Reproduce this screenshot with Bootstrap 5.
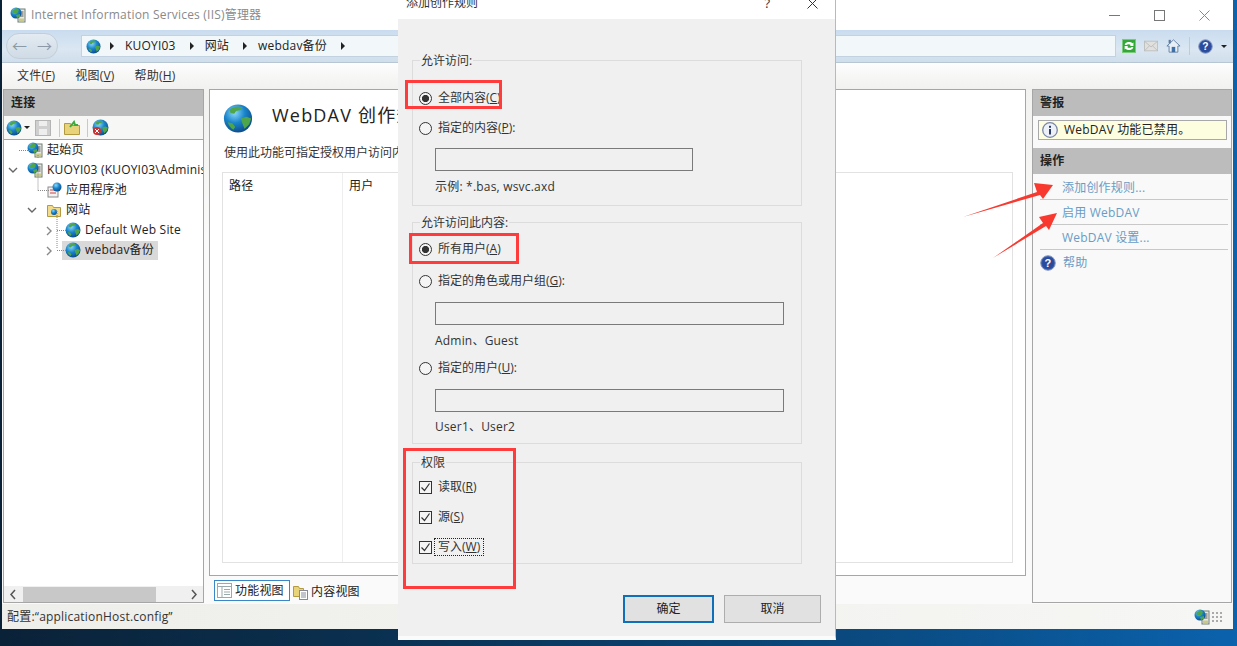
<!DOCTYPE html>
<html lang="zh-CN">
<head>
<meta charset="utf-8">
<title>IIS</title>
<link rel="stylesheet" href="https://cdn.jsdelivr.net/npm/bootstrap@5.3.0/dist/css/bootstrap.min.css">
<style>
html,body{margin:0;height:646px;overflow:hidden}
body{font:12px/16px "Open Sans","Noto Sans CJK SC",sans-serif;letter-spacing:.2px;color:#222;background:#0b2a45}
.desk{position:relative;width:1237px;height:646px;overflow:hidden;background:linear-gradient(90deg,#0a2238 0,#0a3050 30%,#0a4a80 70%,#0b62ad 100%)}
.appwin{margin-left:2px;width:1231px;height:629px;background:#fff}
.ttl{height:30px;padding:0 6px 0 8px;background:#fff;color:#8a8a8a;font-size:12px;flex:none}
.ttl svg.ap{margin-right:5px}
.winbtn{width:45px}
.addr{height:33px;flex:none;background:linear-gradient(#c9dcef,#dbe7f2 60%,#cfdeec);border-bottom:1px solid #b8c6d4;padding:0 6px 0 4px}
.navpill{width:52px;height:26px;border-radius:13px;background:linear-gradient(#e4ebf2,#cfdbe6);border:1px solid #c3ced9;margin-right:23px;color:#8d99a5;font-size:15px;flex:none}
.addrbox{height:22px;flex:1;background:#f2f8fa;border:1px solid #c2d2e0;padding-left:4px;color:#222}
.crumb{width:0;height:0;border-left:4px solid #222;border-top:4px solid transparent;border-bottom:4px solid transparent;margin:0 11px 0 14px}
.crumb.first{margin-left:9px}
.addr-tools{width:111px;padding-left:6px}
.menu-bar{height:26px;flex:none;background:linear-gradient(#fdfdfd,#f1f1ef);padding-left:15px;gap:20px;color:#333}
.panes{flex:1;min-height:0;background:linear-gradient(#f2f2f0,#fafafa 30%,#fafafa);padding:0 2px 1px 1px}
.panelz{border:1px solid #a6a6a6;background:#fff}
.leftp{width:201px;flex:none}
.pane-h{height:26px;flex:none;background:#bcbcbc;padding-left:7px;font-weight:600;color:#222}
.pane-t{height:24px;flex:none;background:#f7f7f5;border-bottom:1px solid #a6a6a6;padding-left:2px}
.sepv{width:1px;height:18px;background:#c9c9c9;flex:none}
.tb1{margin:0 5px 0 2px;border-left:3px solid transparent;border-right:3px solid transparent;border-top:3px solid #222}
.tb2{margin:0 4px 0 8px}
.tb3{margin:0 4px 0 7px}
.treez{position:relative;flex:1;overflow:hidden}
.tr{height:20px;white-space:nowrap}
.lv0{padding-left:4px}.lv1{padding-left:23px}.lv2{padding-left:42px}
.slot{width:19px;flex:none;color:#777}
.tr svg.ic{margin-right:4px;flex:none}
.sel{background:#d9d9d9;height:19px;padding-right:4px;margin-left:-3px;padding-left:3px}
.treeln{position:absolute;left:0;top:0;pointer-events:none}
.hscroll{height:16px;flex:none;background:#f0f0f0;padding:0 5px}
.hthumb{width:133px;height:15px;background:#c8c8c8;margin-left:6px}
.centerc{width:817px;flex:none;margin:0 6px 0 5px}
.mainp{height:487px;flex:none;padding:0 12px 12px 12px;min-height:0;overflow:hidden}
.bighead{height:51px;padding-top:13px;margin-left:1px;gap:19px;font-size:18px;letter-spacing:1.2px;white-space:nowrap;flex:none}
.descz{height:31px;padding:4px 0 0 2px;white-space:nowrap;color:#333;flex:none;letter-spacing:0}
.gridz{flex:1;border:1px solid #e2e2e2;background:#fff}
.gridh{padding:5px 0 0 6px;width:120px;border-right:1px solid #eee;height:100%}
.gridh2{padding:5px 0 0 6px}
.tabz{height:28px;padding:4px 0 0 5px;flex:none}
.tabon{height:21px;width:76px;border:1px solid #3a87c8;background:#fff;padding-left:2px;gap:3px}
.tabz2{gap:3px;padding-left:3px}
.rightp{width:200px;flex:none;background:#f8f9f8}
.alertz{height:32px;flex:none;padding:4px 5px 0 5px}
.alertb{height:20px;border:1px solid #a8a8a8;background:#fdfde0;padding-left:3px;gap:6px;width:189px;white-space:nowrap}
.act{height:25px;margin:0 3px 0 7px;padding:2px 0 0 22px;border-bottom:1px solid #c8c8c8;color:#6a9cc6;white-space:nowrap}
.act.top1{height:26px}
.act.nob{border-bottom:0;padding:0;gap:7px}
.statusz{height:25px;flex:none;background:linear-gradient(90deg,#eeeeea,#f6f6f4);padding:0 11px 0 5px;color:#333}
.grip{width:11px;height:11px;background-image:radial-gradient(#aaa 1.2px,transparent 1.4px);background-size:4px 4px;margin-left:1px}
/* dialog */
.dlg{position:absolute;left:398px;top:-11px;width:438px;height:651px;background:#f0f0f0;border-right:1px solid #b9b9b9;border-bottom:4px solid #fbfbfb;letter-spacing:0}
.dlg-t{height:30px;background:#fff;padding:0 17px 2px 8px;color:#333;flex:none}
.grp{position:relative;border:1px solid #dcdcdc;margin:0 33px 0 14px;padding:0 6px}
.grp-l{display:block;width:fit-content;background:#f0f0f0;margin:-8px 0 0 1px;padding:0 1px;color:#333;height:16px}
.g1{margin-top:41px;height:146px}
.g2{margin-top:16px;height:222px}
.g3{margin-top:18px;height:102px}
.opt{height:16px;min-height:0;padding-left:0;margin:0;gap:6px;color:#333;white-space:nowrap;display:flex;align-items:center}
.opt .form-check-input{float:none;margin:0;width:13px;height:13px;flex:none;background-color:#f5f5f5;border:1px solid #333}
.opt .form-check-input:focus{box-shadow:none;border-color:#333}
.opt .form-check-input:checked[type=radio]{background-color:#f5f5f5;border-color:#333;background-image:radial-gradient(circle,#333 0,#333 3.4px,transparent 3.8px)}
.opt .form-check-input:checked[type=checkbox]{background-color:#f5f5f5;border-color:#333;border-radius:0;background-size:11px 11px;background-image:url("data:image/svg+xml,%3csvg xmlns='http://www.w3.org/2000/svg' viewBox='0 0 11 11'%3e%3cpath d='M1.5 5.500l3 3 5-7' fill='none' stroke='%23333' stroke-width='1.2'/%3e%3c/svg%3e")}
.opt .form-check-input[type=checkbox]{border-radius:0}
.fld{display:block;height:23px;min-height:0;margin-left:16px;background:#f0f0f0;border:1px solid #7a7a7a;border-radius:0;width:349px;padding:0}
.fld.sm{width:258px}
.hintz{margin-left:16px;color:#333;height:16px;letter-spacing:.2px}
.focusd{outline:1px dotted #222;padding:0 3px;margin-left:-3px;line-height:16px}
.dlg-foot{gap:10px;padding:31px 14px 0 0}
.btnz{height:28px;border-radius:0;font-size:12px;padding:0;background:#e1e1e1;border:1px solid #adadad;color:#222;line-height:1}
.btnz.pri{width:91px;border:2px solid #0f6fb8}
.btnz.sec{width:97px}
/* overlays */
.redb{position:absolute;border:3px solid #ff3b3b;pointer-events:none}
.rb1{left:405px;top:80px;width:97px;height:29px}
.rb2{left:409px;top:233px;width:110px;height:31px}
.rb3{left:403px;top:448px;width:113px;height:141px}
.arrows{position:absolute;left:950px;top:170px;pointer-events:none}
</style>
</head>
<body>
<svg width="0" height="0" style="position:absolute">
<defs>
<radialGradient id="gb" cx=".38" cy=".3" r=".8"><stop offset="0" stop-color="#8ad8f8"/><stop offset=".45" stop-color="#1a85cc"/><stop offset="1" stop-color="#0a3f7c"/></radialGradient>
<symbol id="globe" viewBox="0 0 32 32"><circle cx="16" cy="16" r="15" fill="url(#gb)"/><path d="M9 5c4-2 9-2 12-1l-2 3-5 1-2 3-4-1-1-3zM19 16l6-2 5 2-2 6-5 5-2-5zM5 20l5 1 3 4-2 3c-3-2-5-5-6-8z" fill="#4fa64a"/></symbol>
<symbol id="srv" viewBox="0 0 16 16"><rect x="8" y="2" width="7" height="13" fill="#e8e8e2" stroke="#6f7f74"/><path d="M9.500 5h4M9.500 7h4M9.500 9h4" stroke="#555"/><rect x="9" y="11.500" width="5" height="3" fill="#c9c98a"/><circle cx="6" cy="6" r="5.500" fill="url(#gb)"/><path d="M2 4l4-3 3 2-2 3-4 0zM6 8l4-1 0 3-3 1z" fill="#4fa64a"/></symbol>
<symbol id="helpb" viewBox="0 0 16 16"><circle cx="8" cy="8" r="7.300" fill="#2f55a8" stroke="#8c9cc0"/><circle cx="8" cy="8" r="5.600" fill="#2a4a9c"/><text x="8" y="12" text-anchor="middle" font-size="11" font-weight="700" fill="#fff" font-family="Liberation Sans,sans-serif">?</text></symbol>
</defs>
</svg>
<div class="desk">
  <div class="appwin d-flex flex-column">
    <div class="ttl d-flex align-items-center">
      <svg class="ap" width="16" height="16"><use href="#srv"/></svg>
      <span class="flex-grow-1">Internet Information Services (IIS)管理器</span>
      <span class="winbtn d-flex justify-content-center"><svg width="11" height="11"><path d="M0 5.500h11" stroke="#777"/></svg></span>
      <span class="winbtn d-flex justify-content-center"><svg width="11" height="11"><rect x=".5" y=".5" width="10" height="10" fill="none" stroke="#777"/></svg></span>
      <span class="winbtn d-flex justify-content-center"><svg width="11" height="11"><path d="M.5.500l10 10M10.500.500l-10 10" stroke="#888"/></svg></span>
    </div>
    <div class="addr d-flex align-items-center">
      <div class="navpill d-flex align-items-center justify-content-around"><span>←</span><span>→</span></div>
      <div class="addrbox d-flex align-items-center">
        <svg width="15" height="15"><use href="#globe"/></svg>
        <span class="crumb first"></span><span>KUOYI03</span>
        <span class="crumb"></span><span>网站</span>
        <span class="crumb"></span><span>webdav备份</span>
        <span class="crumb"></span>
      </div>
      <div class="addr-tools d-flex align-items-center gap-2">
        <svg width="16" height="16" viewBox="0 0 16 16"><rect x=".5" y=".5" width="15" height="15" fill="#33a838" stroke="#7ccc7c"/><path d="M3 7a5 4 0 0 1 9-2l1-1v4H9l1-1a3 2.500 0 0 0-5 0zM13 9a5 4 0 0 1-9 2l-1 1V8h4l-1 1a3 2.500 0 0 0 5 0z" fill="#fff"/></svg>
        <svg width="16" height="16" viewBox="0 0 16 16"><rect x=".5" y="2.500" width="15" height="11" fill="#e0e0de" stroke="#bcbcbc"/><path d="M1 3l7 6 7-6M1 13l5-5M15 13l-5-5" stroke="#bcbcbc" fill="none"/></svg>
        <svg width="17" height="16" viewBox="0 0 17 16"><path d="M8.500 1L1 8h2.500v7h10V8H16z" fill="#e8eef6" stroke="#5b7a9e"/><rect x="6.500" y="9" width="4" height="6" fill="#3d6fa8"/><rect x="3" y="1" width="2.500" height="4" fill="#5b7a9e"/></svg>
        <span class="sepv"></span>
        <svg width="17" height="17"><use href="#helpb"/></svg>
        <span style="border-left:3px solid transparent;border-right:3px solid transparent;border-top:3px solid #222"></span>
      </div>
    </div>
    <div class="menu-bar d-flex align-items-center">
      <span>文件(<u>F</u>)</span><span>视图(<u>V</u>)</span><span>帮助(<u>H</u>)</span>
    </div>
    <div class="panes d-flex">
      <div class="leftp panelz d-flex flex-column">
        <div class="pane-h d-flex align-items-center">连接</div>
        <div class="pane-t d-flex align-items-center">
          <svg width="16" height="16"><use href="#globe"/></svg>
          <span class="tb1"></span>
          <svg width="16" height="16" viewBox="0 0 16 16"><rect x=".5" y=".5" width="15" height="15" fill="#cfcfcf" stroke="#b4b4b4"/><rect x="4" y="1" width="8" height="5" fill="#eee"/><rect x="4" y="9" width="8" height="6" fill="#eee"/></svg>
          <span class="sepv tb2"></span>
          <svg width="16" height="15" viewBox="0 0 16 15"><path d="M.5 3.500h6l1 2h8v9H.5z" fill="#e8d27a" stroke="#b39a3f"/><path d="M6 7l4-5 1 3h3" fill="none" stroke="#3fa83f" stroke-width="2"/></svg>
          <span class="sepv tb3"></span>
          <svg width="17" height="17" viewBox="0 0 17 17"><use href="#globe"/><circle cx="5" cy="12" r="4" fill="#c33"/><path d="M3 10l4 4M7 10l-4 4" stroke="#fff"/></svg>
        </div>
        <div class="treez">
          <svg class="treeln" width="120" height="130"><path d="M15 10.500h11M34 15v4M34 30.500v20.500M34 50.500h11M53 71v37M53 90.500h10M53 110.500h10" fill="none" stroke="#888" stroke-dasharray="1 1"/></svg>
          <div class="tr lv0 d-flex align-items-center"><span class="slot"></span><svg class="ic" width="16" height="16"><use href="#srv"/></svg><span>起始页</span></div>
          <div class="tr lv0 d-flex align-items-center"><span class="slot"><svg width="10" height="7"><path d="M1 1l4 4 4-4" fill="none" stroke="#666" stroke-width="1.400"/></svg></span><svg class="ic" width="16" height="16"><use href="#srv"/></svg><span>KUOYI03 (KUOYI03\Administrator)</span></div>
          <div class="tr lv1 d-flex align-items-center"><span class="slot"></span><svg class="ic" width="16" height="16" viewBox="0 0 16 16"><rect x="2" y="5" width="10" height="10" fill="#f2f2f2" stroke="#8a8a8a"/><path d="M4 8h6M4 11h6" stroke="#c44"/><circle cx="11" cy="5" r="4.500" fill="url(#gb)"/></svg><span>应用程序池</span></div>
          <div class="tr lv1 d-flex align-items-center"><span class="slot"><svg width="10" height="7"><path d="M1 1l4 4 4-4" fill="none" stroke="#666" stroke-width="1.400"/></svg></span><svg class="ic" width="16" height="16" viewBox="0 0 16 16"><path d="M1.500 3.500h5l1 2h7v9h-13z" fill="#f0dc8c" stroke="#b39a3f"/><circle cx="8" cy="10" r="3" fill="url(#gb)"/></svg><span>网站</span></div>
          <div class="tr lv2 d-flex align-items-center"><span class="slot"><svg width="7" height="10"><path d="M1 1l4 4-4 4" fill="none" stroke="#888" stroke-width="1.400"/></svg></span><svg class="ic" width="16" height="16"><use href="#globe"/></svg><span>Default Web Site</span></div>
          <div class="tr lv2 d-flex align-items-center"><span class="slot"><svg width="7" height="10"><path d="M1 1l4 4-4 4" fill="none" stroke="#888" stroke-width="1.400"/></svg></span><span class="sel d-flex align-items-center"><svg class="ic" width="16" height="16"><use href="#globe"/></svg><span>webdav备份</span></span></div>
        </div>
        <div class="hscroll d-flex align-items-center">
          <svg width="8" height="11"><path d="M6 1L2 5.500 6 10" fill="none" stroke="#555" stroke-width="1.500"/></svg>
          <span class="hthumb"></span>
          <svg class="ms-auto" width="8" height="11"><path d="M2 1l4 4.500L2 10" fill="none" stroke="#555" stroke-width="1.500"/></svg>
        </div>
      </div>
      <div class="centerc d-flex flex-column">
        <div class="mainp panelz d-flex flex-column">
          <div class="bighead d-flex">
            <svg width="30" height="31"><use href="#globe"/></svg>
            <span style="line-height:24px">WebDAV 创作规则</span>
          </div>
          <div class="descz">使用此功能可指定授权用户访问内容的规则。</div>
          <div class="gridz d-flex">
            <div class="gridh">路径</div>
            <div class="gridh2">用户</div>
          </div>
        </div>
        <div class="tabz d-flex">
          <div class="tabon d-flex align-items-center">
            <svg width="15" height="15" viewBox="0 0 15 15"><rect x=".5" y=".5" width="14" height="14" fill="#fff" stroke="#9aa"/><path d="M.5 3.500h14M5 3.500v11M7 6.500h6M7 9h6M7 11.500h6" stroke="#9aa"/></svg>
            <span>功能视图</span>
          </div>
          <div class="tabz2 d-flex align-items-center">
            <svg width="15" height="16" viewBox="0 0 15 16"><path d="M.5 2.500h5l1 2h4v8h-10z" fill="#e8d27a" stroke="#b39a3f"/><rect x="6.500" y="6.500" width="8" height="9" fill="#fff" stroke="#889"/><path d="M8 9h5M8 11h5M8 13h5" stroke="#889"/></svg>
            <span>内容视图</span>
          </div>
        </div>
      </div>
      <div class="rightp panelz d-flex flex-column">
        <div class="pane-h d-flex align-items-center">警报</div>
        <div class="alertz">
          <div class="alertb d-flex align-items-center">
            <svg width="16" height="16" viewBox="0 0 16 16"><circle cx="8" cy="8" r="7.300" fill="#eef0f8" stroke="#7a86a8" stroke-width="1.300"/><rect x="7" y="7" width="2" height="5.500" fill="#2a3c6c"/><rect x="7" y="3.800" width="2" height="2" fill="#2a3c6c"/></svg>
            <span>WebDAV 功能已禁用。</span>
          </div>
        </div>
        <div class="pane-h d-flex align-items-center">操作</div>
        <div class="act top1 d-flex align-items-center">添加创作规则...</div>
        <div class="act d-flex align-items-center">启用 WebDAV</div>
        <div class="act d-flex align-items-center">WebDAV 设置...</div>
        <div class="act nob d-flex align-items-center"><svg width="16" height="16"><use href="#helpb"/></svg><span>帮助</span></div>
      </div>
    </div>
    <div class="statusz d-flex align-items-center">
      <span class="flex-grow-1">配置:“applicationHost.config”</span>
      <svg width="16" height="16"><use href="#srv"/></svg>
      <span class="grip"></span>
    </div>
  </div>

  <div class="dlg d-flex flex-column">
    <div class="dlg-t d-flex align-items-center">
      <span class="flex-grow-1">添加创作规则</span>
      <span style="font-size:13px;margin-right:37px">?</span>
      <svg width="11" height="11"><path d="M.5.500l10 10M10.500.500l-10 10" stroke="#333"/></svg>
    </div>
    <fieldset class="grp g1">
      <span class="grp-l">允许访问:</span>
      <label class="opt form-check" style="margin-top:21px"><input class="form-check-input" type="radio" name="a" checked><span>全部内容(<u>C</u>)</span></label>
      <label class="opt form-check" style="margin-top:14px"><input class="form-check-input" type="radio" name="a"><span>指定的内容(<u>P</u>):</span></label>
      <input class="fld sm form-control" type="text" style="margin-top:12px">
      <div class="hintz" style="margin-top:8px">示例: *.bas, wsvc.axd</div>
    </fieldset>
    <fieldset class="grp g2">
      <span class="grp-l">允许访问此内容:</span>
      <label class="opt form-check" style="margin-top:10px"><input class="form-check-input" type="radio" name="b" checked><span>所有用户(<u>A</u>)</span></label>
      <label class="opt form-check" style="margin-top:16px"><input class="form-check-input" type="radio" name="b"><span>指定的角色或用户组(<u>G</u>):</span></label>
      <input class="fld form-control" type="text" style="margin-top:13px">
      <div class="hintz" style="margin-top:8px">Admin、Guest</div>
      <label class="opt form-check" style="margin-top:11px"><input class="form-check-input" type="radio" name="b"><span>指定的用户(<u>U</u>):</span></label>
      <input class="fld form-control" type="text" style="margin-top:13px">
      <div class="hintz" style="margin-top:7px">User1、User2</div>
    </fieldset>
    <fieldset class="grp g3">
      <span class="grp-l">权限</span>
      <label class="opt form-check" style="margin-top:8px"><input class="form-check-input" type="checkbox" checked><span>读取(<u>R</u>)</span></label>
      <label class="opt form-check" style="margin-top:14px"><input class="form-check-input" type="checkbox" checked><span>源(<u>S</u>)</span></label>
      <label class="opt form-check" style="margin-top:14px"><input class="form-check-input" type="checkbox" checked><span class="focusd">写入(<u>W</u>)</span></label>
    </fieldset>
    <div class="dlg-foot d-flex justify-content-end">
      <button type="button" class="btn btnz pri">确定</button>
      <button type="button" class="btn btnz sec">取消</button>
    </div>
  </div>

  <div class="redb rb1"></div>
  <div class="redb rb2"></div>
  <div class="redb rb3"></div>
  <svg class="arrows" width="120" height="100" viewBox="950 170 120 100"><path d="M963 217L1037 192 1034 183 1053 185 1043 199 1040 195z" fill="#f8392f"/><path d="M993 258L1043 223 1039 217 1057 213 1049 230 1046 226z" fill="#f8392f"/></svg>
</div>
</body>
</html>
